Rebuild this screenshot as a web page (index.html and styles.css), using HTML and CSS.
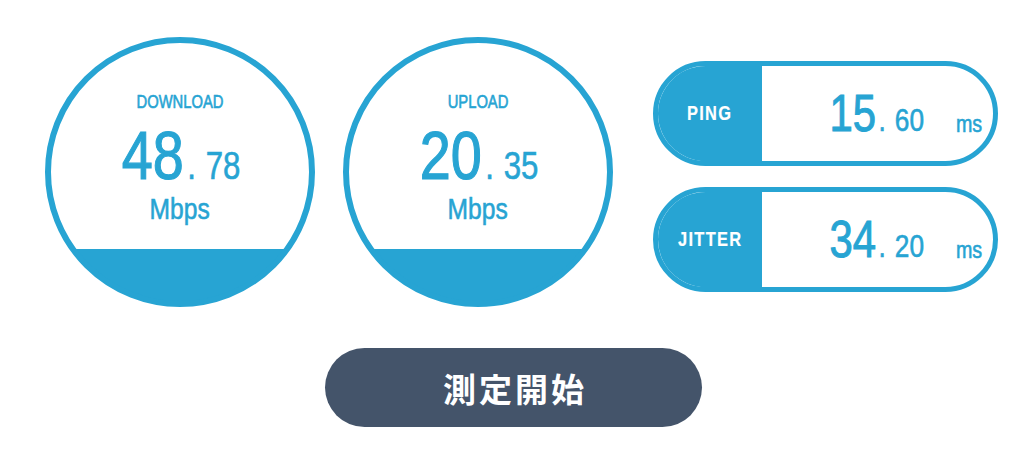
FILE: index.html
```html
<!DOCTYPE html>
<html lang="ja">
<head>
<meta charset="utf-8">
<title>Speed Test</title>
<link rel="stylesheet" href="styles.css">
</head>
<body>
<main class="page">
  <section class="results">
    <div class="gauge">
      <div class="gauge-label narrow">DOWNLOAD</div>
      <div class="gauge-value narrow"><span class="int">48</span><span class="dot">.</span><span class="dec">78</span></div>
      <div class="gauge-unit narrow">Mbps</div>
    </div>
    <div class="gauge">
      <div class="gauge-label narrow">UPLOAD</div>
      <div class="gauge-value narrow"><span class="int">20</span><span class="dot">.</span><span class="dec">35</span></div>
      <div class="gauge-unit narrow">Mbps</div>
    </div>
    <div class="pills">
      <div class="pill">
        <div class="pill-label"><span class="narrow">PING</span></div>
        <div class="pill-value"><span class="p-text narrow-right"><span class="p-int">15</span><span class="p-dot">.</span><span class="p-dec">60</span><span class="p-unit">ms</span></span></div>
      </div>
      <div class="pill">
        <div class="pill-label"><span class="narrow">JITTER</span></div>
        <div class="pill-value"><span class="p-text narrow-right"><span class="p-int">34</span><span class="p-dot">.</span><span class="p-dec">20</span><span class="p-unit">ms</span></span></div>
      </div>
    </div>
  </section>
  <button class="start" type="button">測定開始</button>
</main>
</body>
</html>
```

FILE: styles.css
```css
* { box-sizing: border-box; }

html, body {
  margin: 0;
  padding: 0;
  background: #ffffff;
}

body {
  width: 1024px;
  height: 450px;
  overflow: hidden;
  font-family: "Liberation Sans", Arial, sans-serif;
  color: #27a4d3;
}

/* condensed look: horizontal compression of Arial-metric text */
.narrow {
  display: inline-block;
  transform: scaleX(0.82);
  transform-origin: center;
  -webkit-text-stroke: 0.6px currentColor;
}

.narrow-right {
  display: inline-flex;
  transform: scaleX(0.82);
  transform-origin: right center;
  -webkit-text-stroke: 0.6px currentColor;
}

.page {
  display: flex;
  flex-direction: column;
  align-items: flex-start;
  padding: 37px 0 0 45px;
}

.results {
  display: flex;
  align-items: flex-start;
}

.gauge {
  width: 270px;
  height: 270px;
  border: 6px solid #27a4d3;
  border-radius: 50%;
  background: linear-gradient(to bottom, #ffffff 212px, #27a4d3 212px);
  background-origin: border-box;
  display: flex;
  flex-direction: column;
  align-items: center;
  padding-top: 50px;
}

.gauge + .gauge {
  margin-left: 28px;
}

.gauge-label {
  font-size: 18px;
  line-height: 18px;
}

.gauge-value {
  margin-top: 10px;
  height: 68px;
  display: flex;
  align-items: baseline;
  padding-left: 2px;
}

.gauge-value .int {
  font-size: 68px;
  line-height: 68px;
  -webkit-text-stroke: 1.2px currentColor;
}

.gauge-value .dot {
  font-size: 38px;
  line-height: 38px;
  margin-left: 4px;
  margin-right: 12px;
}

.gauge-value .dec {
  font-size: 38px;
  line-height: 38px;
}

.gauge-unit {
  margin-top: 5px;
  font-size: 30px;
  line-height: 29px;
}

.pills {
  margin-left: 40px;
  margin-top: 24px;
  display: flex;
  flex-direction: column;
  gap: 21px;
}

.pill {
  width: 345px;
  height: 105px;
  border: 5px solid #27a4d3;
  border-radius: 53px;
  overflow: hidden;
  display: flex;
}

.pill-label {
  width: 104px;
  background: #27a4d3;
  color: #ffffff;
  display: flex;
  align-items: center;
  justify-content: center;
  font-size: 20px;
  font-weight: bold;
  letter-spacing: 1.6px;
  padding-left: 0;
}

.pill-label .narrow {
  -webkit-text-stroke: 0.2px currentColor;
}

.pill-value {
  flex: 1;
  display: flex;
  justify-content: flex-end;
  padding: 22px 11px 0 0;
}

.p-text {
  align-items: baseline;
  line-height: 51px;
}

.p-int {
  font-size: 51px;
  -webkit-text-stroke: 1px currentColor;
}

.p-dot {
  font-size: 32px;
  margin-left: 3px;
  margin-right: 11px;
}

.p-dec {
  font-size: 32px;
}

.p-unit {
  font-size: 24px;
  margin-left: 39px;
  position: relative;
  top: 1px;
}

.start {
  margin-top: 41px;
  margin-left: 280px;
  width: 377px;
  height: 79px;
  border: none;
  border-radius: 40px;
  background: #44546a;
  color: #ffffff;
  font-family: "Noto Sans CJK JP", "Noto Sans", sans-serif;
  font-weight: bold;
  font-size: 33px;
  letter-spacing: 3px;
  padding: 0 0 0 3px;
  cursor: pointer;
}
```
